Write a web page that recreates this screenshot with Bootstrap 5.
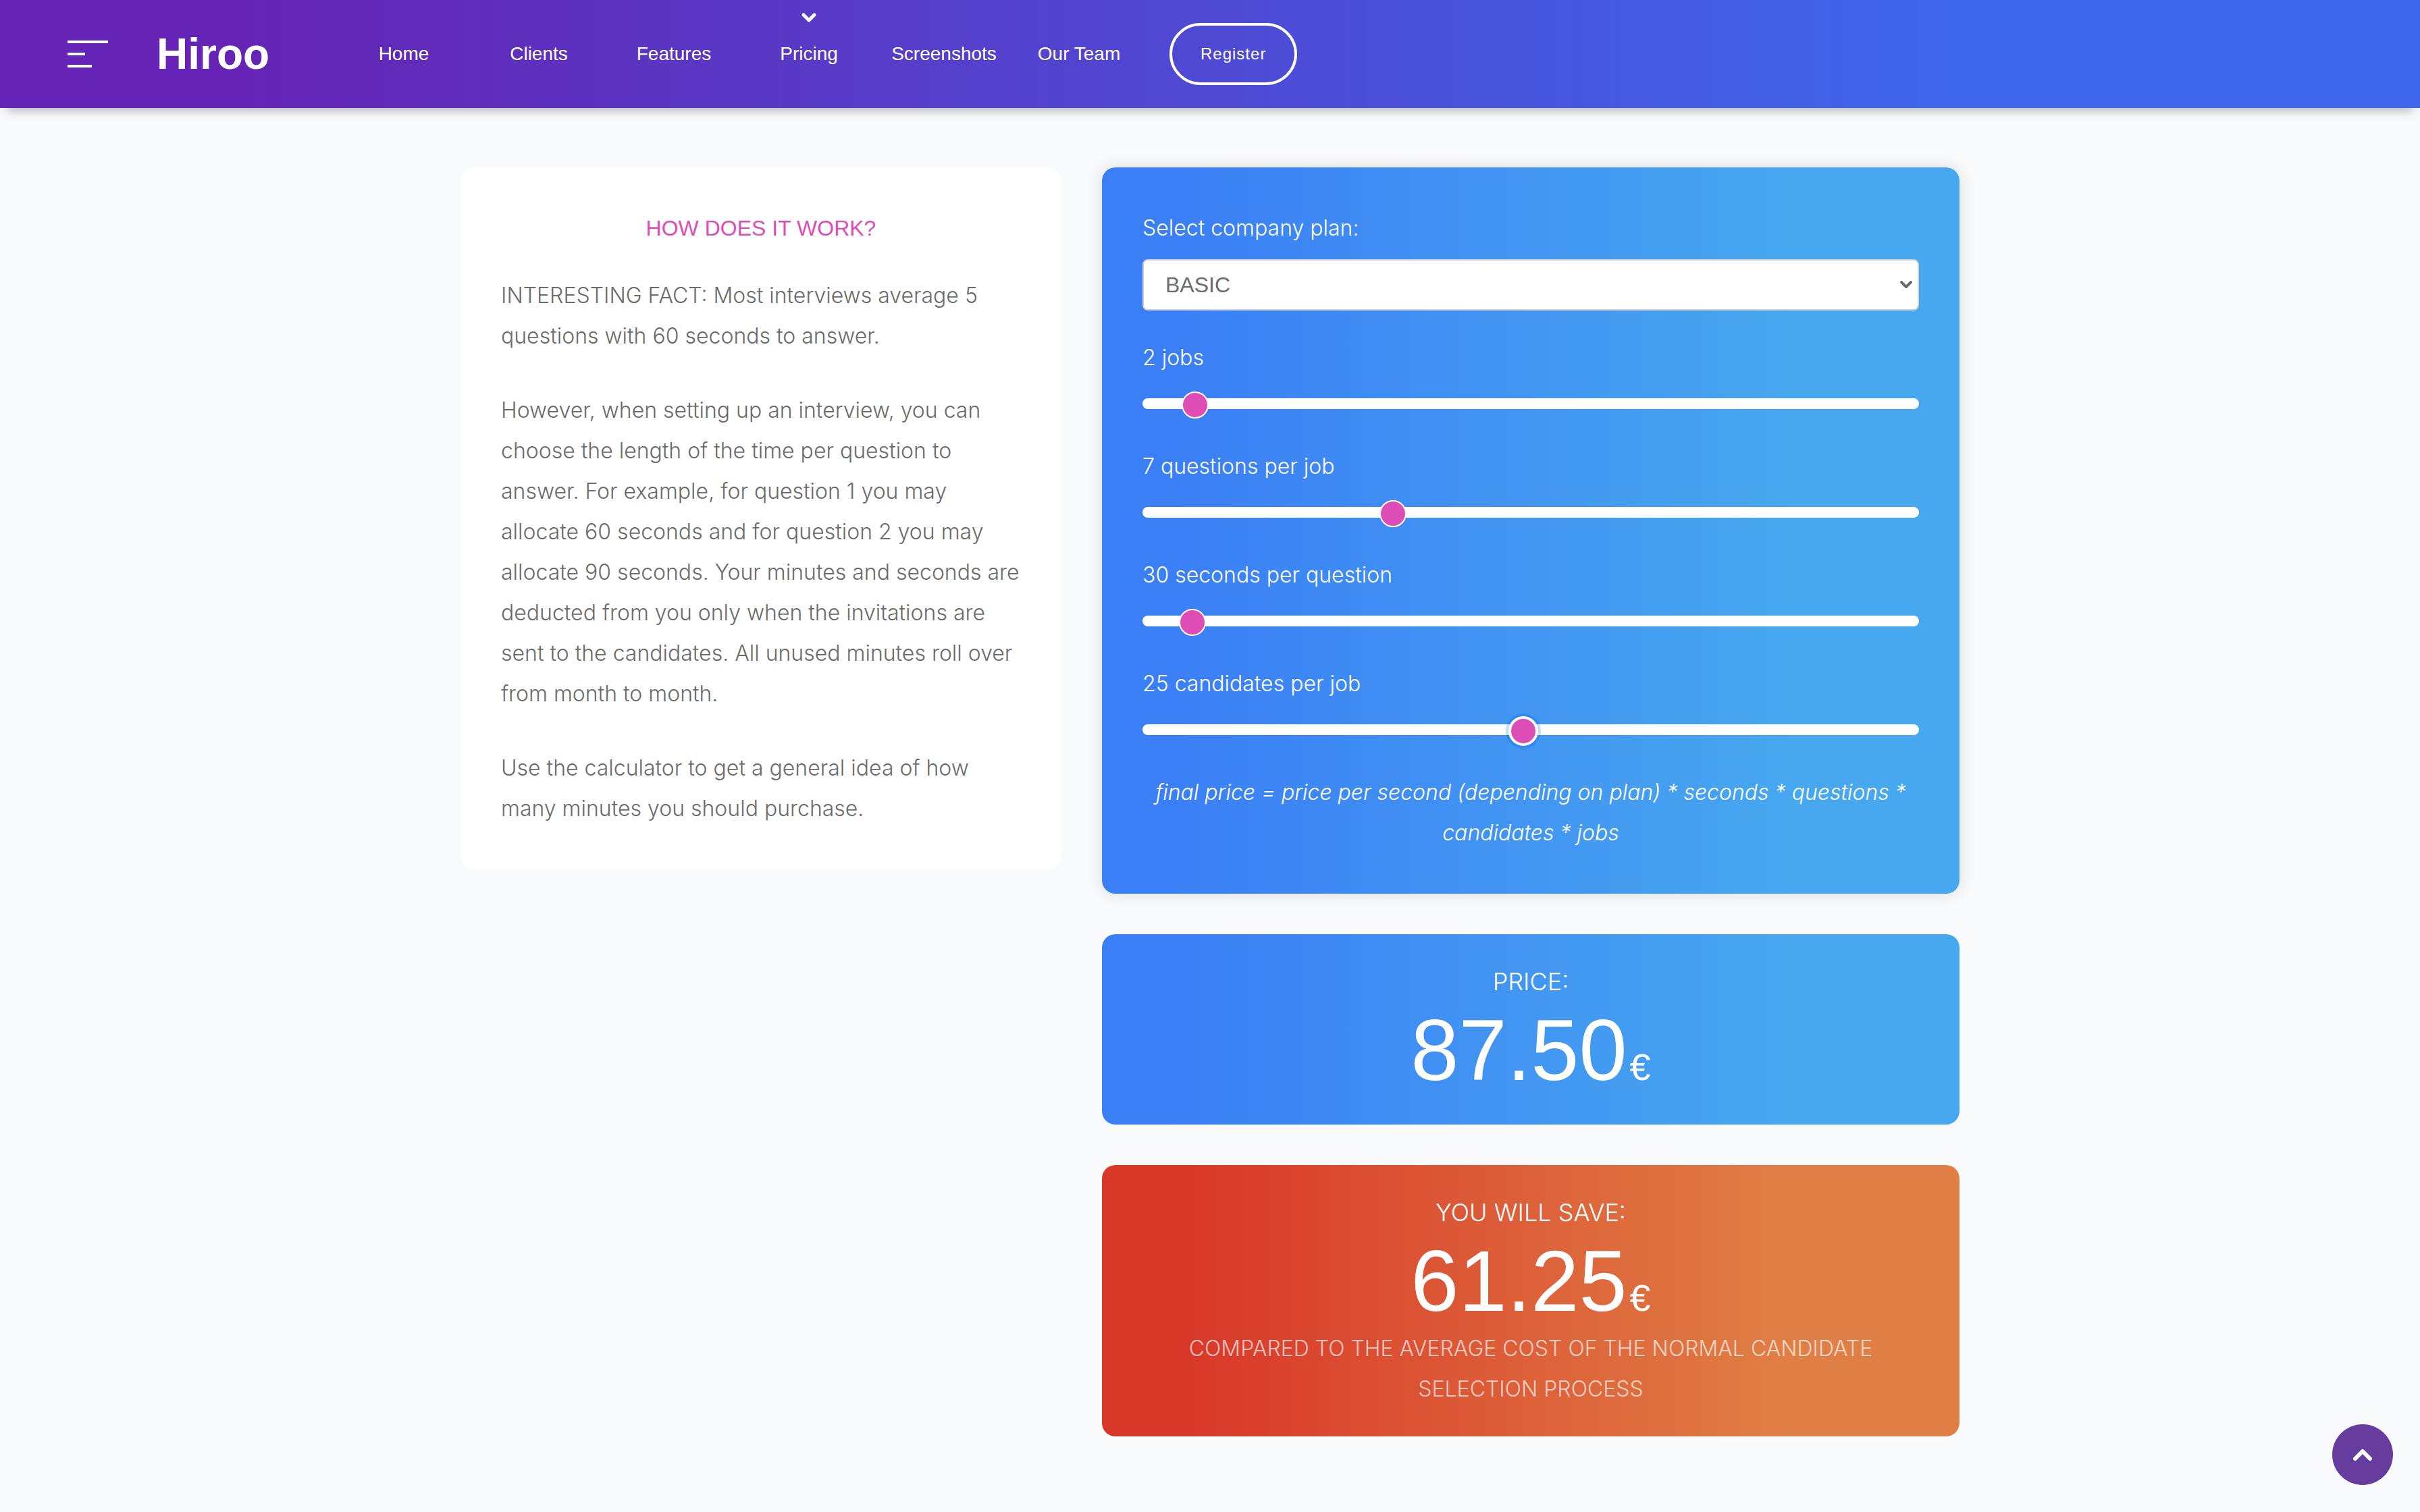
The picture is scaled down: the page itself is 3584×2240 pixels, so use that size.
<!DOCTYPE html>
<html lang="en">
<head>
<meta charset="utf-8">
<meta name="viewport" content="width=device-width, initial-scale=1">
<title>Hiroo – Pricing</title>
<link href="https://cdn.jsdelivr.net/npm/bootstrap@5.3.0/dist/css/bootstrap.min.css" rel="stylesheet">
<style>
  body {
    background: #f8fafc;
    color: #6b6b6b;
    font-family: "Liberation Sans", Arial, sans-serif;
    font-size: 32px;
    line-height: 60px;
    min-height: 100vh;
  }
  .top-nav {
    min-height: 160px;
    padding: 0 100px;
    background: linear-gradient(90deg, #6524b5 10%, #3d67ec 82%);
    box-shadow: 0 14px 14px -10px rgba(0, 0, 0, .28);
  }
  .menu-toggle { width: 60px; height: 40px; }
  .menu-toggle svg, .back-top svg, .nav-caret { display: block; }
  .brand-name {
    margin: 0 0 0 72px;
    width: 266px;
    font-size: 64px;
    line-height: 80px;
    font-weight: 700;
  }
  .top-nav .nav-link {
    width: 200px;
    padding: 0;
    color: #fff;
    font-size: 28px;
    line-height: 160px;
    text-align: center;
  }
  .nav-caret { position: absolute; top: 18px; left: 50%; margin-left: -12px; }
  .btn-register {
    margin-left: 34px;
    padding: 0 42px;
    border: 4px solid #fff;
    border-radius: 46px;
    color: #fff;
    font-size: 24px;
    line-height: 84px;
    letter-spacing: 1px;
  }
  .btn-register:hover { background: #fff; color: #6524b5; }
  .calc-page {
    --bs-gutter-x: 60px;
    max-width: 2280px;
    padding-top: 88px;
    padding-bottom: 60px;
  }
  .calc-row { --bs-gutter-x: 60px; --bs-gutter-y: 60px; }
  .calc-column { gap: 60px; }
  .panel { border-radius: 20px; padding: 60px; }
  .panel-title {
    color: #de4db5;
    font-size: 32px;
    line-height: 60px;
    font-weight: 400;
    margin-bottom: 40px;
  }
  .panel p, .field-label, .total-label, .total-note {
    font-family: Inter, "Liberation Sans", sans-serif;
    font-weight: 300;
  }
  .panel p { margin-bottom: 50px; }
  .panel p:last-child { margin-bottom: 0; }
  .panel-blue {
    background: linear-gradient(90deg, #3b7ff6 8%, #47a7ef 80%);
    color: #fff;
  }
  .panel-red {
    background: linear-gradient(90deg, #d93829 10%, #e07f45 80%);
    color: #fff;
  }
  .panel-raised { box-shadow: 0 0 24px rgba(0, 0, 0, .12); }
  .panel-total { padding: 40px 60px; text-align: center; }
  .field-label { display: block; }
  .plan-select {
    appearance: none;
    height: 76px;
    margin: 16px 0 40px;
    padding: 0 60px 0 32px;
    border: 2px solid #d3d0d2;
    border-radius: 8px;
    color: #6b6b6b;
    font-size: 32px;
    line-height: 60px;
    background: #fff url("data:image/svg+xml,%3Csvg xmlns='http://www.w3.org/2000/svg' viewBox='0 0 20 14'%3E%3Cpath d='M3 3l7 7 7-7' fill='none' stroke='%236b6b6b' stroke-width='4' stroke-linecap='round' stroke-linejoin='round'/%3E%3C/svg%3E") no-repeat right 7px center / 20px 14px;
  }
  .calc-range { display: block; height: 16px; margin: 30px 0 55px; }
  .calc-range::-webkit-slider-runnable-track {
    height: 16px;
    border-radius: 8px;
    background: #fff;
  }
  .calc-range::-webkit-slider-thumb {
    width: 40px;
    height: 40px;
    margin-top: -10px;
    border: 2px solid #fff;
    border-radius: 50%;
    background: #de4db5;
  }
  .calc-range.active-range::-webkit-slider-thumb {
    box-shadow: 0 0 0 2px #fff, 0 0 0 6px rgba(0, 90, 230, .22);
  }
  .total-label { font-size: 36px; line-height: 60px; }
  .total-value { padding-top: 2px; font-size: 128px; line-height: 140px; }
  .total-value .currency { font-size: 56px; line-height: 56px; margin-left: 4px; }
  .total-note { color: rgba(255, 255, 255, .7); }
  .back-top {
    position: fixed;
    right: 40px;
    bottom: 40px;
    width: 90px;
    height: 90px;
    padding: 0;
    border: 0;
    border-radius: 50%;
    background: #663d9e;
  }
</style>
</head>
<body>
<header class="top-nav d-flex align-items-center">
  <button type="button" class="menu-toggle btn p-0 border-0" aria-label="Menu">
    <svg width="60" height="40" viewBox="0 0 60 40" fill="#fff"><path d="M0 0h60v4H0zM0 18h26v4H0zM0 36h36v4H0z"/></svg>
  </button>
  <div class="brand-name"><a href="#" class="text-white text-decoration-none">Hiroo</a></div>
  <nav class="nav flex-nowrap align-items-center">
    <a class="nav-link" href="#">Home</a>
    <a class="nav-link" href="#">Clients</a>
    <a class="nav-link" href="#">Features</a>
    <a class="nav-link position-relative" href="#" aria-current="page">
      <svg class="nav-caret" width="24" height="17" viewBox="0 0 24 17" fill="none" stroke="#fff" stroke-width="5" stroke-linecap="round" stroke-linejoin="round"><path d="M4 4l8 8 8-8"/></svg>
      Pricing</a>
    <a class="nav-link" href="#">Screenshots</a>
    <a class="nav-link" href="#">Our Team</a>
  </nav>
  <button type="button" class="btn btn-register">Register</button>
</header>

<main class="container-fluid calc-page">
  <div class="row calc-row">
    <div class="col-5">
      <section class="panel bg-white">
        <h2 class="panel-title text-center">HOW DOES IT WORK?</h2>
        <p>INTERESTING FACT: Most interviews average 5 questions with 60 seconds to answer.</p>
        <p>However, when setting up an interview, you can choose the length of the time per question to answer. For example, for question 1 you may allocate 60 seconds and for question 2 you may allocate 90 seconds. Your minutes and seconds are deducted from you only when the invitations are sent to the candidates. All unused minutes roll over from month to month.</p>
        <p>Use the calculator to get a general idea of how many minutes you should purchase.</p>
      </section>
    </div>
    <div class="col-7 d-flex flex-column calc-column">
      <form class="panel panel-blue panel-raised">
        <label class="field-label" for="plan">Select company plan:</label>
        <select id="plan" class="plan-select form-select">
          <option selected>BASIC</option>
        </select>
        <label class="field-label" for="jobs">2 jobs</label>
        <input id="jobs" type="range" class="form-range calc-range" min="1" max="20" value="2">
        <label class="field-label" for="questions">7 questions per job</label>
        <input id="questions" type="range" class="form-range calc-range" min="1" max="20" value="7">
        <label class="field-label" for="seconds">30 seconds per question</label>
        <input id="seconds" type="range" class="form-range calc-range" min="1" max="600" value="30">
        <label class="field-label" for="candidates">25 candidates per job</label>
        <input id="candidates" type="range" class="form-range calc-range active-range" min="1" max="50" value="25">
        <p class="text-center fst-italic">final price = price per second (depending on plan) * seconds * questions * candidates * jobs</p>
      </form>
      <section class="panel panel-blue panel-total">
        <div class="total-label">PRICE:</div>
        <div class="total-value">87.50<span class="currency">€</span></div>
      </section>
      <section class="panel panel-red panel-total">
        <div class="total-label">YOU WILL SAVE:</div>
        <div class="total-value">61.25<span class="currency">€</span></div>
        <div class="total-note">COMPARED TO THE AVERAGE COST OF THE NORMAL CANDIDATE SELECTION PROCESS</div>
      </section>
    </div>
  </div>
</main>

<button type="button" class="btn back-top d-flex align-items-center justify-content-center" aria-label="Back to top">
  <svg width="30" height="21" viewBox="0 0 30 21" fill="none" stroke="#fff" stroke-width="6" stroke-linecap="round" stroke-linejoin="round"><path d="M4 16L15 5l11 11"/></svg>
</button>
<script src="https://cdn.jsdelivr.net/npm/bootstrap@5.3.0/dist/js/bootstrap.bundle.min.js"></script>
</body>
</html>
